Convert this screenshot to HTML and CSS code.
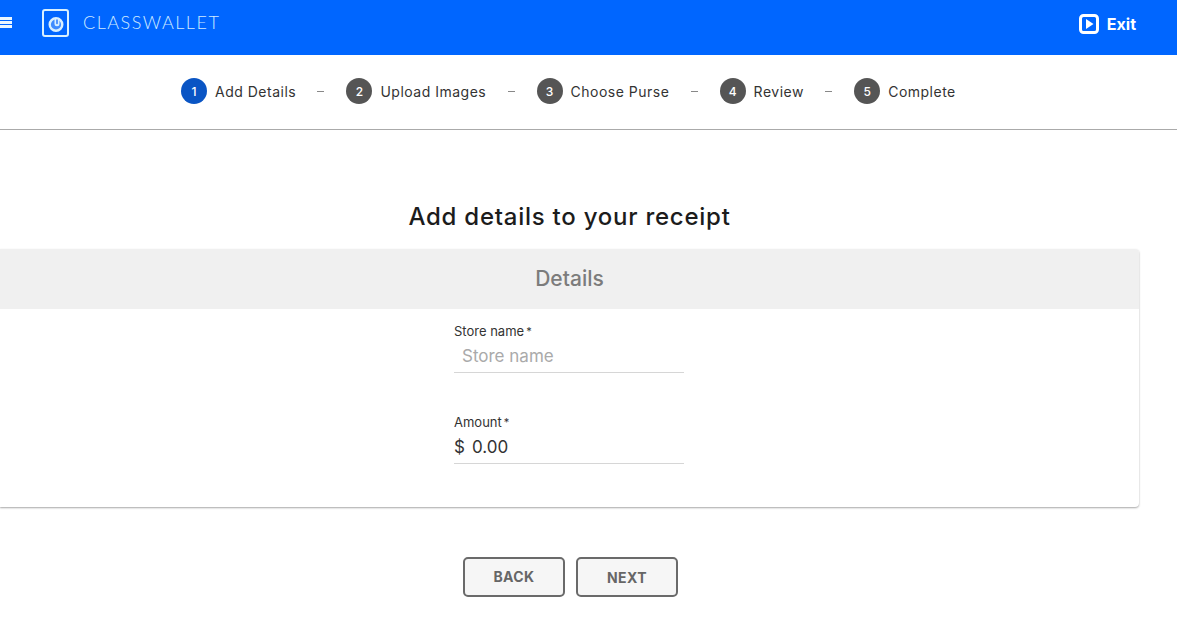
FILE: index.html
```html
<!DOCTYPE html>
<html lang="en">
<head>
<meta charset="utf-8">
<title>ClassWallet</title>
<link rel="stylesheet" href="styles.css">
</head>
<body>
<header class="topbar">
  <span class="menu"><i></i><i></i><i></i></span>
  <svg class="logo" width="27" height="28" viewBox="0 0 27 28" aria-hidden="true">
    <rect x="1" y="1" width="25" height="26" rx="2" fill="none" stroke="#d8f0ff" stroke-width="2"/>
    <circle cx="14" cy="15.500" r="6.300" fill="#3f8cff" stroke="#d8f0ff" stroke-width="2.400"/>
    <path d="M12.500 9h5v5.800a2.500 2.500 0 0 1-5 0z" fill="#d8f0ff"/>
    <path d="M14.300 10.500h1.400v4a.7.7 0 0 1-1.400 0z" fill="#1a6fff"/>
  </svg>
  <span class="brand">CLASSWALLET</span>
  <span class="exit">
    <svg width="20" height="20" viewBox="0 0 20 20" aria-hidden="true">
      <rect x="1.500" y="1.500" width="17" height="17" rx="3" fill="none" stroke="#fff" stroke-width="3"/>
      <path d="M7 5l7.500 5-7.500 5z" fill="#fff"/>
    </svg>
    Exit
  </span>
</header>
<nav class="stepper">
  <div class="step active"><span class="num">1</span><span class="name">Add Details</span></div>
  <span class="dash"></span>
  <div class="step"><span class="num">2</span><span class="name">Upload Images</span></div>
  <span class="dash"></span>
  <div class="step"><span class="num">3</span><span class="name">Choose Purse</span></div>
  <span class="dash"></span>
  <div class="step"><span class="num">4</span><span class="name">Review</span></div>
  <span class="dash"></span>
  <div class="step"><span class="num">5</span><span class="name">Complete</span></div>
</nav>
<main class="content">
  <h1 class="title">Add details to your receipt</h1>
  <section class="card">
    <h2 class="card-head">Details</h2>
    <form class="form">
      <div class="field">
        <span class="label">Store name<span class="req">*</span></span>
        <div class="control placeholder">Store name</div>
      </div>
      <div class="field">
        <span class="label">Amount<span class="req">*</span></span>
        <div class="control value"><span class="cur">$</span>0.00</div>
      </div>
    </form>
  </section>
  <div class="actions">
    <button class="btn" type="button">BACK</button>
    <button class="btn" type="button">NEXT</button>
  </div>
</main>
</body>
</html>
```
FILE: styles.css
```css
* { box-sizing: border-box; }
html, body { margin: 0; padding: 0; }
body {
  background: #fff;
  font-family: "Inter", "Liberation Sans", sans-serif;
  color: #222;
  overflow: hidden;
  height: 617px;
}
.topbar {
  height: 55px;
  background: #0066ff;
  display: flex;
  align-items: flex-start;
  color: #fff;
}
.menu {
  width: 12px;
  margin-top: 17px;
  display: flex;
  flex-direction: column;
  gap: 1px;
}
.menu i { display: block; height: 3px; background: #eaf6ff; }
.logo { margin: 9px 0 0 30px; }
.brand {
  margin: 12px 0 0 14px;
  font-family: "Lato", sans-serif;
  font-weight: 300;
  font-size: 18px;
  line-height: 20px;
  letter-spacing: 1.5px;
  color: #cfeaff;
}
.exit {
  margin: 14px 41px 0 auto;
  display: flex;
  align-items: center;
  gap: 8px;
  font-weight: 700;
  font-size: 16px;
  line-height: 20px;
}
.stepper {
  height: 75px;
  border-bottom: 1px solid #aaa;
  padding: 0 0 2px 181px;
  display: flex;
  align-items: center;
}
.step { display: flex; align-items: center; gap: 8px; }
.num {
  width: 26px;
  height: 26px;
  border-radius: 50%;
  background: #555;
  color: #fff;
  font-size: 12px;
  font-weight: 500;
  display: flex;
  align-items: center;
  justify-content: center;
}
.active .num { background: #0a55c4; }
.name { font-size: 14px; letter-spacing: 0.5px; color: #333; white-space: nowrap; }
.dash { width: 7px; height: 1px; background: #888; margin: 0 22px 0 21.25px; }
.content { width: 1139px; }
.title {
  margin: 74px 0 0;
  text-align: center;
  font-size: 24px;
  line-height: 26px;
  font-weight: 500;
  color: #1c1c1c;
  letter-spacing: 0.75px;
}
.card {
  margin-top: 19px;
  height: 258px;
  background: #fff;
  border-radius: 0 4px 4px 0;
  box-shadow: 0 1px 2px rgba(0, 0, 0, 0.35);
}
.card-head {
  margin: 0;
  height: 60px;
  background: #f0f0f0;
  border-radius: 0 4px 0 0;
  text-align: center;
  font-size: 21px;
  line-height: 60px;
  font-weight: 500;
  color: #7c7c7c;
}
.form {
  width: 230px;
  margin-left: 454px;
  padding-top: 14px;
  display: flex;
  flex-direction: column;
  gap: 41px;
  box-sizing: content-box;
}
.label { display: block; font-size: 13px; line-height: 16px; color: #333; }
.req { font-size: 11px; vertical-align: 1px; margin-left: 2px; }
.control {
  height: 34px;
  border-bottom: 1px solid #d6d6d6;
  font-size: 17px;
  line-height: 34px;
}
.placeholder { color: #aaa; padding-left: 8px; }
.value { color: #333; }
.cur { margin-right: 7px; }
.actions { margin-top: 50px; display: flex; justify-content: center; gap: 11px; padding-left: 2px; }
.btn {
  width: 102px;
  height: 40px;
  background: #f6f6f6;
  border: 2px solid #6a6a6a;
  border-radius: 5px;
  color: #666;
  font-family: inherit;
  font-weight: 700;
  font-size: 14px;
  letter-spacing: 0.4px;
}
.btn:first-child { padding-bottom: 3px; }
```
